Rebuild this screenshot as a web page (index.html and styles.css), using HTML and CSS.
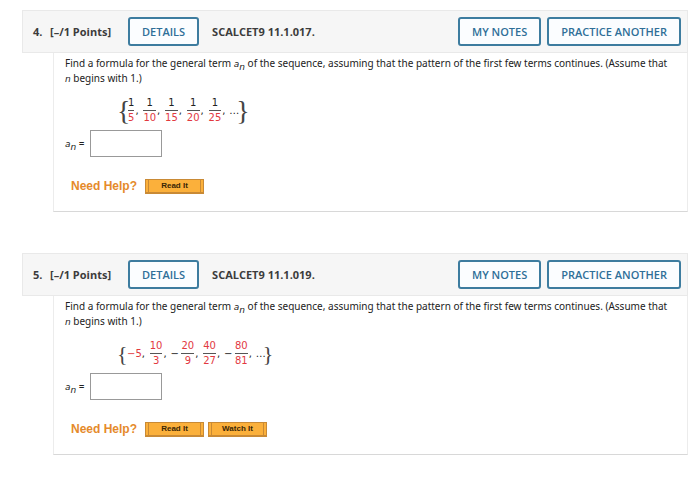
FILE: index.html
```
<!DOCTYPE html>
<html lang="en">
<head>
<meta charset="utf-8">
<title>Sequences homework</title>
<link rel="stylesheet" href="styles.css">
</head>
<body>
<main class="page">
  <section class="question">
    <header class="bar">
      <span class="number">4.</span>
      <span class="points">[–/1 Points]</span>
      <button class="btn" type="button">DETAILS</button>
      <h2 class="code">SCALCET9 11.1.017.</h2>
      <button class="btn notes" type="button">MY NOTES</button>
      <button class="btn" type="button">PRACTICE ANOTHER</button>
    </header>
    <div class="body">
      <p class="prompt">Find a formula for the general term <i>a<sub>n</sub></i> of the sequence, assuming that the pattern of the first few terms continues. (Assume that <i>n</i> begins with 1.)</p>
      <div class="sequence">
        <span class="brace">{</span>
        <span class="frac"><span>1</span><span class="red">5</span></span><span class="comma">,</span>
        <span class="frac"><span>1</span><span class="red">10</span></span><span class="comma">,</span>
        <span class="frac"><span>1</span><span class="red">15</span></span><span class="comma">,</span>
        <span class="frac"><span>1</span><span class="red">20</span></span><span class="comma">,</span>
        <span class="frac"><span>1</span><span class="red">25</span></span><span class="comma">,</span>
        <span class="dots">…</span>
        <span class="brace">}</span>
      </div>
      <div class="answer">
        <label for="a4"><i>a<sub>n</sub></i> =</label>
        <input id="a4" type="text">
      </div>
      <div class="help">
        <span class="help-title">Need Help?</span>
        <button class="help-btn" type="button">Read It</button>
      </div>
    </div>
  </section>

  <section class="question">
    <header class="bar">
      <span class="number">5.</span>
      <span class="points">[–/1 Points]</span>
      <button class="btn" type="button">DETAILS</button>
      <h2 class="code">SCALCET9 11.1.019.</h2>
      <button class="btn notes" type="button">MY NOTES</button>
      <button class="btn" type="button">PRACTICE ANOTHER</button>
    </header>
    <div class="body">
      <p class="prompt">Find a formula for the general term <i>a<sub>n</sub></i> of the sequence, assuming that the pattern of the first few terms continues. (Assume that <i>n</i> begins with 1.)</p>
      <div class="sequence">
        <span class="brace small">{</span>
        <span class="red">−5</span><span class="comma">,</span>
        <span class="frac"><span class="red">10</span><span class="red">3</span></span><span class="comma">,</span>
        <span class="minus">−</span>
        <span class="frac"><span class="red">20</span><span class="red">9</span></span><span class="comma">,</span>
        <span class="frac"><span class="red">40</span><span class="red">27</span></span><span class="comma">,</span>
        <span class="minus">−</span>
        <span class="frac"><span class="red">80</span><span class="red">81</span></span><span class="comma">,</span>
        <span class="dots">…</span>
        <span class="brace small">}</span>
      </div>
      <div class="answer">
        <label for="a5"><i>a<sub>n</sub></i> =</label>
        <input id="a5" type="text">
      </div>
      <div class="help">
        <span class="help-title">Need Help?</span>
        <button class="help-btn" type="button">Read It</button>
        <button class="help-btn" type="button">Watch It</button>
      </div>
    </div>
  </section>
</main>
</body>
</html>
```
FILE: styles.css
```
* {
  box-sizing: border-box;
}

body {
  margin: 0;
  background: #fff;
  color: #222;
  font: 10px/15px "Noto Sans", Verdana, sans-serif;
}

.page {
  display: flex;
  flex-direction: column;
  gap: 41px;
  padding: 10px 12px 30px 22px;
}

.bar {
  display: flex;
  align-items: center;
  height: 43px;
  padding: 0 6px 0 10px;
  border: 1px solid #e9e9e9;
  background: #f6f6f6;
  color: #3c3c3c;
  font: bold 11px/16px "Open Sans", sans-serif;
}

.number {
  width: 17px;
}

.points {
  width: 78px;
}

.code {
  margin: 0 0 0 13px;
  font: inherit;
}

.btn {
  height: 29px;
  padding: 0 12px;
  border: 2px solid #3d7c9f;
  border-radius: 3px;
  background: #fbfdff;
  color: #2f6f98;
  font: 600 11px/16px "Open Sans", sans-serif;
  white-space: nowrap;
}

.notes {
  margin: 0 6px 0 auto;
}

.body {
  margin-left: 31px;
  padding: 3px 17px 17px 11px;
  border: 1px solid #ececec;
  border-top: 0;
  border-bottom-color: #d8d8d8;
}

.prompt {
  margin: 0 0 5px;
}

i {
  font-family: "DejaVu Sans", Verdana, sans-serif;
  font-size: 9px;
  line-height: 1;
}

sub {
  font-size: 9px;
  line-height: 0;
}

.sequence {
  display: flex;
  align-items: center;
  height: 39px;
  padding-left: 52px;
  font-family: "DejaVu Sans", Verdana, sans-serif;
  font-size: 10px;
}

.brace {
  width: 10px;
  color: #444;
  font: 28px/28px "Liberation Serif", serif;
}

.small {
  font-size: 22px;
}

.dots + .brace {
  margin-left: -2px;
}

.frac {
  display: flex;
  flex-direction: column;
  padding: 0 1px;
  text-align: center;
  line-height: 14px;
}

.frac span + span {
  border-top: 1px solid #555;
}

.red {
  color: #e2393f;
}

.comma {
  width: 7px;
}

.minus {
  width: 10px;
}

.dots {
  width: 9px;
}

.answer {
  display: flex;
  align-items: center;
  gap: 5px;
}

.answer input {
  width: 72px;
  height: 27px;
  border: 1px solid #999;
  background: #fff;
  font: inherit;
}

.help {
  display: flex;
  align-items: center;
  gap: 4px;
  margin-top: 21px;
  padding-left: 6px;
}

.help-title {
  margin-right: 4px;
  color: #e58a2b;
  font: bold 12px/16px "Liberation Sans", Arial, sans-serif;
}

.help-btn {
  width: 59px;
  height: 15px;
  padding: 0;
  border: 1px solid #c98a35;
  border-bottom-width: 2px;
  background: linear-gradient(90deg, #fbb03b 2px, #c98a35 2px 3px, #fbb03b 3px calc(100% - 3px), #c98a35 calc(100% - 3px) calc(100% - 2px), #fbb03b calc(100% - 2px));
  color: #3a2605;
  font: bold 8px/12px "Liberation Sans", Arial, sans-serif;
}
```
